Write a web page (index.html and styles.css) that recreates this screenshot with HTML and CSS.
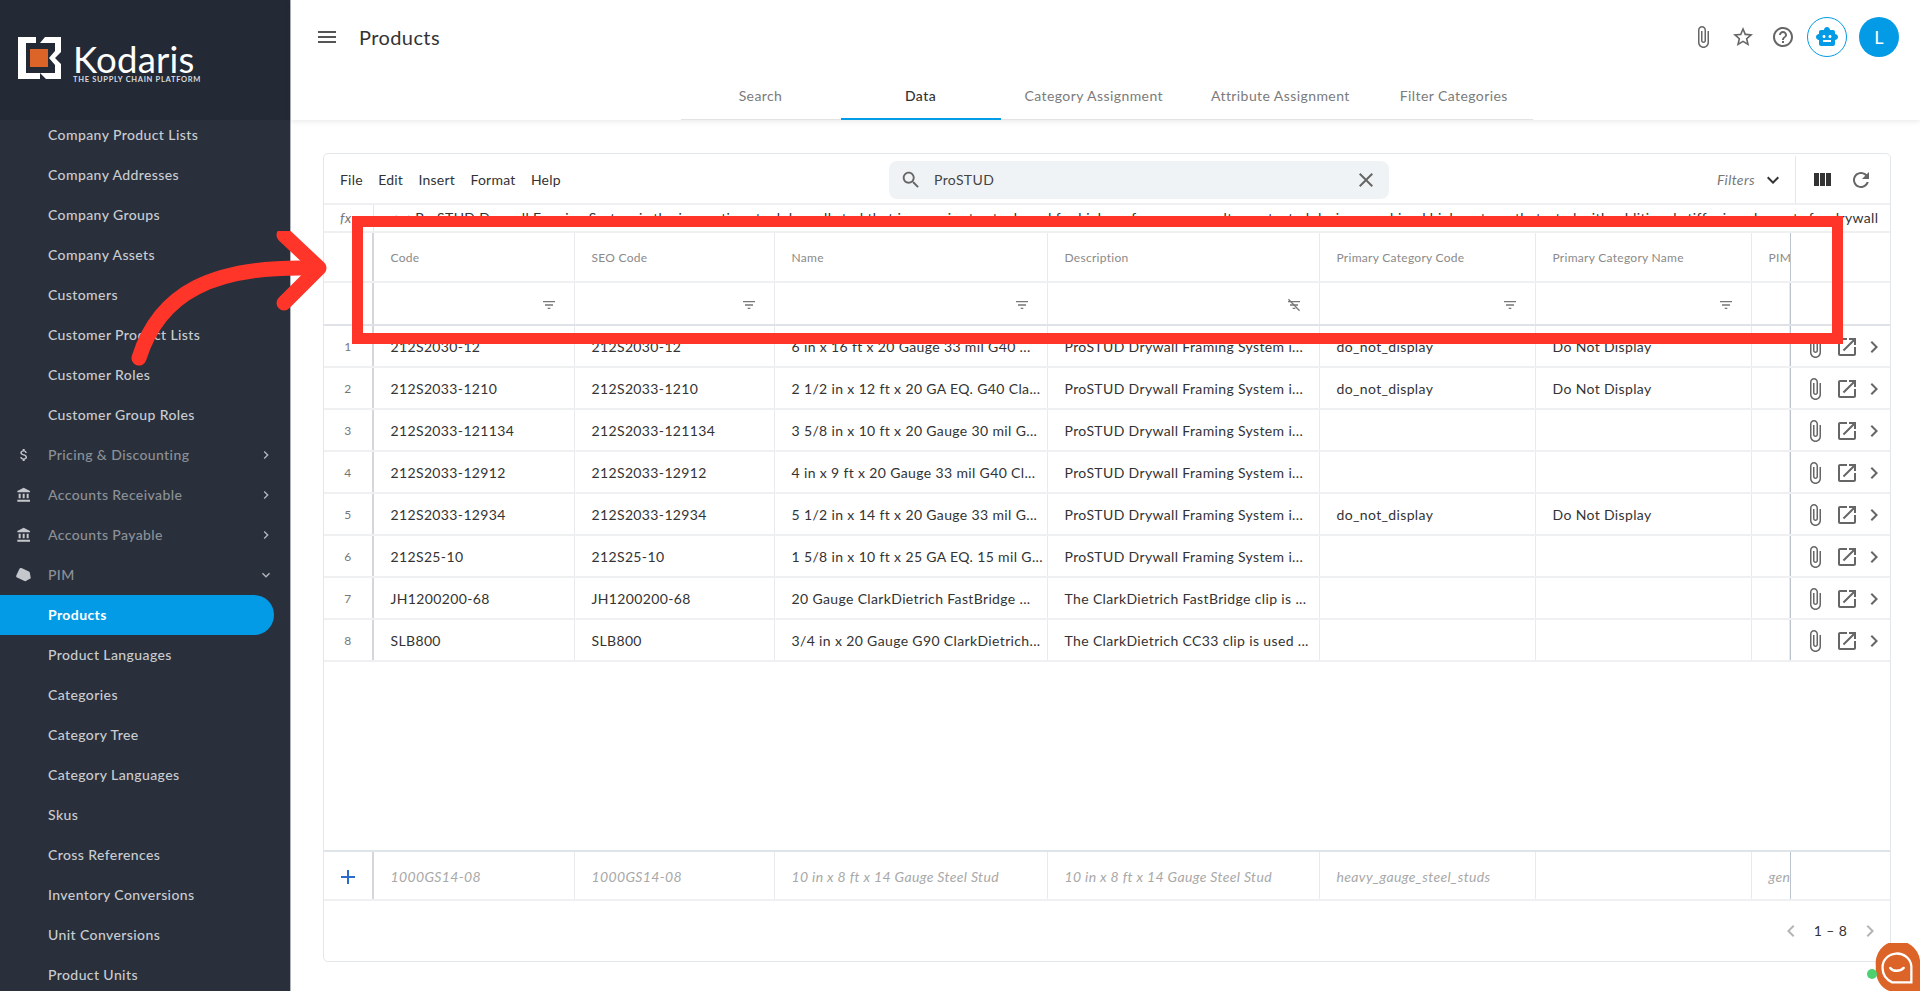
FILE: index.html
```html
<!DOCTYPE html>
<html lang="en">
<head>
<meta charset="utf-8">
<title>Products</title>
<link rel="stylesheet" href="styles.css">
</head>
<body>
<svg class="defs" aria-hidden="true">
  <symbol id="i-menu" viewBox="0 0 24 24"><path d="M3 18h18v-2H3v2zm0-5h18v-2H3v2zm0-7v2h18V6H3z"/></symbol>
  <symbol id="i-clip" viewBox="0 0 24 24"><path d="M16.5 6v11.5c0 2.21-1.79 4-4 4s-4-1.79-4-4V5c0-1.38 1.12-2.5 2.5-2.5s2.5 1.12 2.5 2.5v10.5c0 .55-.45 1-1 1s-1-.45-1-1V6H10v9.5c0 1.38 1.12 2.5 2.5 2.5s2.5-1.12 2.5-2.5V5c0-2.21-1.79-4-4-4S7 2.79 7 5v12.5c0 3.04 2.46 5.5 5.5 5.5s5.5-2.46 5.5-5.5V6h-1.5z"/></symbol>
  <symbol id="i-star" viewBox="0 0 24 24"><path d="M22 9.24l-7.19-.62L12 2 9.19 8.63 2 9.24l5.46 4.73L5.82 21 12 17.27 18.18 21l-1.63-7.03L22 9.24zM12 15.4l-3.76 2.27 1-4.28-3.32-2.88 4.38-.38L12 6.1l1.71 4.04 4.38.38-3.32 2.88 1 4.28L12 15.4z"/></symbol>
  <symbol id="i-help" viewBox="0 0 24 24"><path d="M11 18h2v-2h-2v2zm1-16C6.48 2 2 6.48 2 12s4.48 10 10 10 10-4.48 10-10S17.52 2 12 2zm0 18c-4.41 0-8-3.59-8-8s3.59-8 8-8 8 3.59 8 8-3.59 8-8 8zm0-14c-2.21 0-4 1.79-4 4h2c0-1.1.9-2 2-2s2 .9 2 2c0 2-3 1.75-3 5h2c0-2.25 3-2.5 3-5 0-2.21-1.79-4-4-4z"/></symbol>
  <symbol id="i-bot" viewBox="0 0 24 24"><path d="M20 9V7c0-1.1-.9-2-2-2h-3c0-1.66-1.34-3-3-3S9 3.34 9 5H6c-1.1 0-2 .9-2 2v2c-1.66 0-3 1.34-3 3s1.34 3 3 3v4c0 1.1.9 2 2 2h12c1.1 0 2-.9 2-2v-4c1.66 0 3-1.34 3-3s-1.34-3-3-3zM7.5 11.5C7.5 10.67 8.17 10 9 10s1.5.67 1.5 1.5S9.83 13 9 13s-1.5-.67-1.5-1.5zM16 17H8v-2h8v2zm-1-4c-.83 0-1.5-.67-1.5-1.5S14.17 10 15 10s1.5.67 1.5 1.5S15.83 13 15 13z"/></symbol>
  <symbol id="i-search" viewBox="0 0 24 24"><path d="M15.5 14h-.79l-.28-.27C15.41 12.59 16 11.11 16 9.5 16 5.91 13.09 3 9.5 3S3 5.91 3 9.5 5.91 16 9.5 16c1.61 0 3.09-.59 4.23-1.57l.27.28v.79l5 4.99L20.49 19l-4.99-5zm-6 0C7.01 14 5 11.99 5 9.5S7.01 5 9.5 5 14 7.01 14 9.5 11.99 14 9.5 14z"/></symbol>
  <symbol id="i-close" viewBox="0 0 24 24"><path d="M19 6.41L17.59 5 12 10.59 6.41 5 5 6.41 10.59 12 5 17.59 6.41 19 12 13.41 17.59 19 19 17.59 13.41 12z"/></symbol>
  <symbol id="i-down" viewBox="0 0 24 24"><path d="M16.59 8.59L12 13.17 7.41 8.59 6 10l6 6 6-6z"/></symbol>
  <symbol id="i-right" viewBox="0 0 24 24"><path d="M10 6L8.59 7.41 13.17 12l-4.58 4.59L10 18l6-6z"/></symbol>
  <symbol id="i-left" viewBox="0 0 24 24"><path d="M15.41 7.41L14 6l-6 6 6 6 1.41-1.41L10.83 12z"/></symbol>
  <symbol id="i-cols" viewBox="0 0 24 24"><path d="M10 18h5V5h-5v13zm-6 0h5V5H4v13zM16 5v13h5V5h-5z"/></symbol>
  <symbol id="i-refresh" viewBox="0 0 24 24"><path d="M17.65 6.35C16.2 4.9 14.21 4 12 4c-4.42 0-7.99 3.58-7.99 8s3.57 8 7.99 8c3.73 0 6.84-2.55 7.73-6h-2.08c-.82 2.33-3.04 4-5.65 4-3.31 0-6-2.69-6-6s2.69-6 6-6c1.66 0 3.14.69 4.22 1.78L13 11h7V4l-2.35 2.35z"/></symbol>
  <symbol id="i-filter" viewBox="0 0 24 24"><path d="M10 18h4v-2h-4v2zM3 6v2h18V6H3zm3 7h12v-2H6v2z"/></symbol>
  <symbol id="i-filter-off" viewBox="0 0 24 24"><path d="M10 18h4v-2h-4v2zM3 6v2h18V6H3zm3 7h12v-2H6v2z"/><path d="M4.4 2.6L3 4l16.6 17.4 1.4-1.4z"/></symbol>
  <symbol id="i-open" viewBox="0 0 24 24"><path d="M19 19H5V5h7V3H5c-1.11 0-2 .9-2 2v14c0 1.1.89 2 2 2h14c1.1 0 2-.9 2-2v-7h-2v7zM14 3v2h3.59l-9.83 9.83 1.41 1.41L19 6.41V10h2V3h-7z"/></symbol>
  <symbol id="i-bank" viewBox="0 0 24 24"><path d="M4 10v7h3v-7H4zm6 0v7h3v-7h-3zM2 22h19v-3H2v3zm14-12v7h3v-7h-3zm-4.5-9L2 6v2h19V6l-9.5-5z"/></symbol>
  <symbol id="i-money" viewBox="0 0 24 24"><path d="M11.8 10.9c-2.27-.59-3-1.2-3-2.15 0-1.09 1.01-1.85 2.7-1.85 1.78 0 2.44.85 2.5 2.1h2.21c-.07-1.72-1.12-3.3-3.21-3.81V3h-3v2.16c-1.94.42-3.5 1.68-3.5 3.61 0 2.31 1.91 3.46 4.7 4.13 2.5.6 3 1.48 3 2.41 0 .69-.49 1.79-2.7 1.79-2.06 0-2.87-.92-2.98-2.1h-2.2c.12 2.19 1.76 3.42 3.68 3.83V21h3v-2.15c1.95-.37 3.5-1.5 3.5-3.55 0-2.84-2.43-3.81-4.7-4.4z"/></symbol>
  <symbol id="i-tag" viewBox="0 0 24 24"><path transform="rotate(25 12 12)" d="M17.63 5.84C17.27 5.33 16.67 5 16 5L5 5.01C3.9 5.01 3 5.9 3 7v10c0 1.1.9 1.99 2 1.99L16 19c.67 0 1.27-.33 1.63-.84L22 12l-4.37-6.16z"/></symbol>
  <symbol id="i-plus" viewBox="0 0 24 24"><path d="M19 13h-6v6h-2v-6H5v-2h6V5h2v6h6v2z"/></symbol>
</svg>

<aside class="sidebar">
  <div class="brand">
    <svg class="brand-mark" viewBox="0 0 44 42">
      <path class="mark-w" d="M0 0H18V6H8V36H22V42H0Z"/>
      <path class="mark-w" d="M27 0H43V15L37 21 43 27V42H28L22 36H37V28L31 21 37 14V6H22Z"/>
      <rect class="mark-o" x="12" y="12" width="18" height="18"/>
    </svg>
    <div class="brand-text">
      <div class="brand-name">Kodaris</div>
      <div class="brand-sub">THE SUPPLY CHAIN PLATFORM</div>
    </div>
  </div>
  <nav class="nav">
    <a class="nav-item"><span class="nav-ico"></span>Company Product Lists</a>
    <a class="nav-item"><span class="nav-ico"></span>Company Addresses</a>
    <a class="nav-item"><span class="nav-ico"></span>Company Groups</a>
    <a class="nav-item"><span class="nav-ico"></span>Company Assets</a>
    <a class="nav-item"><span class="nav-ico"></span>Customers</a>
    <a class="nav-item"><span class="nav-ico"></span>Customer Product Lists</a>
    <a class="nav-item"><span class="nav-ico"></span>Customer Roles</a>
    <a class="nav-item"><span class="nav-ico"></span>Customer Group Roles</a>
    <a class="nav-item nav-group"><span class="nav-ico"><svg class="ico-16"><use href="#i-money"/></svg></span>Pricing &amp; Discounting<svg class="nav-chev"><use href="#i-right"/></svg></a>
    <a class="nav-item nav-group"><span class="nav-ico"><svg class="ico-16"><use href="#i-bank"/></svg></span>Accounts Receivable<svg class="nav-chev"><use href="#i-right"/></svg></a>
    <a class="nav-item nav-group"><span class="nav-ico"><svg class="ico-16"><use href="#i-bank"/></svg></span>Accounts Payable<svg class="nav-chev"><use href="#i-right"/></svg></a>
    <a class="nav-item nav-group"><span class="nav-ico"><svg class="ico-18"><use href="#i-tag"/></svg></span>PIM<svg class="nav-chev"><use href="#i-down"/></svg></a>
    <a class="nav-item nav-active"><span class="nav-ico"></span>Products</a>
    <a class="nav-item"><span class="nav-ico"></span>Product Languages</a>
    <a class="nav-item"><span class="nav-ico"></span>Categories</a>
    <a class="nav-item"><span class="nav-ico"></span>Category Tree</a>
    <a class="nav-item"><span class="nav-ico"></span>Category Languages</a>
    <a class="nav-item"><span class="nav-ico"></span>Skus</a>
    <a class="nav-item"><span class="nav-ico"></span>Cross References</a>
    <a class="nav-item"><span class="nav-ico"></span>Inventory Conversions</a>
    <a class="nav-item"><span class="nav-ico"></span>Unit Conversions</a>
    <a class="nav-item"><span class="nav-ico"></span>Product Units</a>
  </nav>
</aside>

<main class="main">
  <header class="header">
    <div class="topbar">
      <svg class="ico-24 hamburger"><use href="#i-menu"/></svg>
      <h1 class="title">Products</h1>
      <div class="top-actions">
        <span class="top-btn"><svg class="ico-24"><use href="#i-clip"/></svg></span>
        <span class="top-btn"><svg class="ico-24"><use href="#i-star"/></svg></span>
        <span class="top-btn"><svg class="ico-24"><use href="#i-help"/></svg></span>
        <span class="bot-btn"><svg class="ico-24"><use href="#i-bot"/></svg></span>
        <span class="avatar">L</span>
      </div>
    </div>
    <div class="tabs">
      <a class="tab">Search</a>
      <a class="tab tab-active">Data</a>
      <a class="tab">Category Assignment</a>
      <a class="tab">Attribute Assignment</a>
      <a class="tab">Filter Categories</a>
    </div>
  </header>

  <section class="content">
    <div class="card">
      <div class="toolbar">
        <div class="menus"><span>File</span><span>Edit</span><span>Insert</span><span>Format</span><span>Help</span></div>
        <div class="search">
          <svg class="ico-22"><use href="#i-search"/></svg>
          <span class="search-text">ProSTUD</span>
          <svg class="ico-24 search-x"><use href="#i-close"/></svg>
        </div>
        <div class="filters"><em>Filters</em><svg class="ico-24 dark"><use href="#i-down"/></svg></div>
        <div class="tools">
          <svg class="ico-24 dark"><use href="#i-cols"/></svg>
          <svg class="ico-24"><use href="#i-refresh"/></svg>
        </div>
      </div>

      <div class="formula">
        <div class="fx">fx</div>
        <div class="fx-text">&lt;p&gt;ProSTUD Drywall Framing System is the innovative steel drywall stud that is superior to steel used for high performance results, protected design, combined higher strength, tested with additional stiffening elements for drywall</div>
      </div>

      <div class="row row-head">
        <div class="num"></div><div class="cell">Code</div><div class="cell">SEO Code</div><div class="cell">Name</div><div class="cell">Description</div><div class="cell">Primary Category Code</div><div class="cell">Primary Category Name</div><div class="cell cell-clip">PIM Type</div><div class="acts"></div>
      </div>
      <div class="row row-filter">
        <div class="num"></div>
        <div class="cell"><svg class="ico-16 fi"><use href="#i-filter"/></svg></div>
        <div class="cell"><svg class="ico-16 fi"><use href="#i-filter"/></svg></div>
        <div class="cell"><svg class="ico-16 fi"><use href="#i-filter"/></svg></div>
        <div class="cell"><svg class="ico-16 fi"><use href="#i-filter-off"/></svg></div>
        <div class="cell"><svg class="ico-16 fi"><use href="#i-filter"/></svg></div>
        <div class="cell"><svg class="ico-16 fi"><use href="#i-filter"/></svg></div>
        <div class="cell"></div><div class="acts"></div>
      </div>

      <div class="row row-data">
        <div class="num">1</div><div class="cell">212S2030-12</div><div class="cell">212S2030-12</div><div class="cell">6 in x 16 ft x 20 Gauge 33 mil G40 ...</div><div class="cell">ProSTUD Drywall Framing System i...</div><div class="cell">do_not_display</div><div class="cell">Do Not Display</div><div class="cell"></div>
        <div class="acts"><svg class="ico-24"><use href="#i-clip"/></svg><svg class="ico-24"><use href="#i-open"/></svg><svg class="ico-24 act-next"><use href="#i-right"/></svg></div>
      </div>
      <div class="row row-data">
        <div class="num">2</div><div class="cell">212S2033-1210</div><div class="cell">212S2033-1210</div><div class="cell">2 1/2 in x 12 ft x 20 GA EQ. G40 Cla...</div><div class="cell">ProSTUD Drywall Framing System i...</div><div class="cell">do_not_display</div><div class="cell">Do Not Display</div><div class="cell"></div>
        <div class="acts"><svg class="ico-24"><use href="#i-clip"/></svg><svg class="ico-24"><use href="#i-open"/></svg><svg class="ico-24 act-next"><use href="#i-right"/></svg></div>
      </div>
      <div class="row row-data">
        <div class="num">3</div><div class="cell">212S2033-121134</div><div class="cell">212S2033-121134</div><div class="cell">3 5/8 in x 10 ft x 20 Gauge 30 mil G...</div><div class="cell">ProSTUD Drywall Framing System i...</div><div class="cell"></div><div class="cell"></div><div class="cell"></div>
        <div class="acts"><svg class="ico-24"><use href="#i-clip"/></svg><svg class="ico-24"><use href="#i-open"/></svg><svg class="ico-24 act-next"><use href="#i-right"/></svg></div>
      </div>
      <div class="row row-data">
        <div class="num">4</div><div class="cell">212S2033-12912</div><div class="cell">212S2033-12912</div><div class="cell">4 in x 9 ft x 20 Gauge 33 mil G40 Cl...</div><div class="cell">ProSTUD Drywall Framing System i...</div><div class="cell"></div><div class="cell"></div><div class="cell"></div>
        <div class="acts"><svg class="ico-24"><use href="#i-clip"/></svg><svg class="ico-24"><use href="#i-open"/></svg><svg class="ico-24 act-next"><use href="#i-right"/></svg></div>
      </div>
      <div class="row row-data">
        <div class="num">5</div><div class="cell">212S2033-12934</div><div class="cell">212S2033-12934</div><div class="cell">5 1/2 in x 14 ft x 20 Gauge 33 mil G...</div><div class="cell">ProSTUD Drywall Framing System i...</div><div class="cell">do_not_display</div><div class="cell">Do Not Display</div><div class="cell"></div>
        <div class="acts"><svg class="ico-24"><use href="#i-clip"/></svg><svg class="ico-24"><use href="#i-open"/></svg><svg class="ico-24 act-next"><use href="#i-right"/></svg></div>
      </div>
      <div class="row row-data">
        <div class="num">6</div><div class="cell">212S25-10</div><div class="cell">212S25-10</div><div class="cell">1 5/8 in x 10 ft x 25 GA EQ. 15 mil G...</div><div class="cell">ProSTUD Drywall Framing System i...</div><div class="cell"></div><div class="cell"></div><div class="cell"></div>
        <div class="acts"><svg class="ico-24"><use href="#i-clip"/></svg><svg class="ico-24"><use href="#i-open"/></svg><svg class="ico-24 act-next"><use href="#i-right"/></svg></div>
      </div>
      <div class="row row-data">
        <div class="num">7</div><div class="cell">JH1200200-68</div><div class="cell">JH1200200-68</div><div class="cell">20 Gauge ClarkDietrich FastBridge ...</div><div class="cell">The ClarkDietrich FastBridge clip is ...</div><div class="cell"></div><div class="cell"></div><div class="cell"></div>
        <div class="acts"><svg class="ico-24"><use href="#i-clip"/></svg><svg class="ico-24"><use href="#i-open"/></svg><svg class="ico-24 act-next"><use href="#i-right"/></svg></div>
      </div>
      <div class="row row-data">
        <div class="num">8</div><div class="cell">SLB800</div><div class="cell">SLB800</div><div class="cell">3/4 in x 20 Gauge G90 ClarkDietrich...</div><div class="cell">The ClarkDietrich CC33 clip is used ...</div><div class="cell"></div><div class="cell"></div><div class="cell"></div>
        <div class="acts"><svg class="ico-24"><use href="#i-clip"/></svg><svg class="ico-24"><use href="#i-open"/></svg><svg class="ico-24 act-next"><use href="#i-right"/></svg></div>
      </div>

      <div class="spacer"></div>

      <div class="row row-new">
        <div class="num"><svg class="ico-24 plus"><use href="#i-plus"/></svg></div><div class="cell">1000GS14-08</div><div class="cell">1000GS14-08</div><div class="cell">10 in x 8 ft x 14 Gauge Steel Stud</div><div class="cell">10 in x 8 ft x 14 Gauge Steel Stud</div><div class="cell">heavy_gauge_steel_studs</div><div class="cell"></div><div class="cell cell-clip">general</div><div class="acts"></div>
      </div>
      <div class="pager">
        <svg class="ico-24 pager-off"><use href="#i-left"/></svg>
        <span class="pager-text">1 – 8</span>
        <svg class="ico-24 pager-off"><use href="#i-right"/></svg>
      </div>
    </div>
  </section>
</main>

<div class="mark-box"></div>
<svg class="mark-arrow" viewBox="0 0 340 140">
  <path d="M139 127C160 60 215 36 305 37"/>
  <path d="M284 4L319 37L284 72"/>
</svg>

<svg class="chat" viewBox="0 0 50 50">
  <path class="chat-bg" d="M4 24a23 23 0 0 1 46-6V50H18C8 46 3 36 4 24z"/>
  <path class="chat-ring" d="M11 26a15 14 0 0 1 30-2v17H21C15 38 11 33 11 26z"/>
  <path class="chat-smile" d="M19 26c3 4 10 4 14 0"/>
</svg>
<span class="chat-dot"></span>
</body>
</html>
```

FILE: styles.css
```css
* { box-sizing: border-box; }
html, body { height: 100%; }
body {
  margin: 0;
  display: flex;
  height: 991px;
  overflow: hidden;
  position: relative;
  background: #fff;
  color: #333;
  font: 14px/20px Lato, "Noto Sans", sans-serif;
  letter-spacing: .36px;
}
.defs { display: none; }
svg { fill: currentColor; flex: none; display: block; }
.ico-16 { width: 16px; height: 16px; }
.ico-18 { width: 18px; height: 18px; }
.ico-22 { width: 22px; height: 22px; }
.ico-24 { width: 24px; height: 24px; }
.dark { color: #333; }

/* sidebar */
.sidebar {
  width: 291px;
  flex: none;
  background: #2a303b;
  border-right: 1px solid #aeb4ba;
  color: #c9ccd1;
  overflow: hidden;
}
.brand {
  height: 120px;
  background: #232a35;
  display: flex;
  align-items: flex-start;
  padding: 37px 0 0 18px;
}
.brand-mark { width: 44px; height: 42px; }
.mark-w { fill: #fff; }
.mark-o { fill: #dc6428; }
.brand-text { margin-left: 11px; color: #fff; }
.brand-name { font-size: 36.6px; line-height: 30px; margin-top: 7px; letter-spacing: .2px; }
.brand-sub { font-size: 7.5px; line-height: 9px; font-weight: 700; letter-spacing: .7px; margin-top: 1px; white-space: nowrap; color: #d9dbde; }
.nav { display: flex; flex-direction: column; margin-top: -5px; letter-spacing: .4px; }
.nav-item {
  height: 40px;
  flex: none;
  display: flex;
  align-items: center;
  margin-right: 16px;
  border-radius: 0 20px 20px 0;
  font-weight: 500;
  white-space: nowrap;
}
.nav-ico { width: 48px; flex: none; display: flex; justify-content: center; }
.nav-group { color: #8c9198; }
.nav-group .nav-ico { color: #c4c7cb; }
.nav-chev { width: 16px; height: 16px; margin-left: auto; color: #b4b7bc; }
.nav-active { background: #039be5; color: #fff; font-weight: 700; }

/* header */
.main { flex: 1; min-width: 0; display: flex; flex-direction: column; }
.header { height: 120px; flex: none; background: #fff; box-shadow: 0 1px 6px rgba(0,0,0,.1); position: relative; }
.topbar { height: 74px; display: flex; align-items: center; padding: 0 21px 0 24px; }
.hamburger { color: #555; }
.title { margin: -1px 0 0 20px; font-size: 20px; font-weight: 400; letter-spacing: .4px; }
.top-actions { margin-left: auto; display: flex; align-items: center; color: #666; }
.top-btn { width: 40px; display: flex; justify-content: center; }
.bot-btn {
  width: 40px; height: 40px; margin-left: 4px;
  border: 1px solid #039be5; border-radius: 50%;
  display: flex; align-items: center; justify-content: center;
  color: #039be5;
}
.avatar {
  width: 40px; height: 40px; margin-left: 12px;
  border-radius: 50%; background: #039be5; color: #fff;
  display: flex; align-items: center; justify-content: center;
  font-size: 18px;
}
.tabs { display: flex; width: 852px; margin: 0 auto; position: relative; left: 1px; height: 46px; border-bottom: 1px solid #e3e3e3; }
.tab {
  flex: 0 0 auto; min-width: 160px; padding: 0 24px 3px; margin-bottom: -1px;
  display: flex; align-items: center; justify-content: center;
  color: #7b7b7b; white-space: nowrap; letter-spacing: .42px;
}
.tab-active { color: #333; font-weight: 500; border-bottom: 2px solid #039be5; padding-bottom: 1px; }

/* card */
.content { flex: 1; min-height: 0; padding: 33px 29px 29px 32px; }
.card {
  height: 809px;
  border: 1px solid #e4e7ea;
  border-radius: 5px;
  display: flex;
  flex-direction: column;
}
.toolbar { height: 51px; flex: none; display: flex; align-items: center; padding-top: 2px; border-bottom: 2px solid #eef0f2; }
.menus { width: 565px; flex: none; display: flex; gap: 15.5px; padding-left: 16px; letter-spacing: .2px; }
.search {
  width: 500px; height: 38px; flex: none;
  background: #f0f3f5; border-radius: 8px;
  display: flex; align-items: center;
  padding: 0 11px; color: #666;
}
.search-text { margin-left: 12px; color: #444; }
.search-x { margin-left: auto; }
.filters { flex: 1; display: flex; align-items: center; justify-content: flex-end; padding-right: 10px; height: 100%; border-right: 1px solid #e4e7ea; color: #777; }
.filters em { margin-right: 6px; }
.tools { width: 94px; flex: none; display: flex; align-items: center; padding-left: 14px; gap: 15px; color: #666; }

.formula { height: 28px; flex: none; display: flex; align-items: center; border-bottom: 2px solid #eef0f2; overflow: hidden; }
.fx { width: 50px; flex: none; height: 100%; padding-left: 16px; border-right: 1px solid #e4e7ea; color: #777; font-style: italic; line-height: 26px; }
.fx-text { margin-left: 16px; margin-right: 10px; white-space: nowrap; overflow: hidden; flex: 1; min-width: 0; }

/* table */
.row {
  display: grid;
  grid-template-columns: 50px 201px 200px 273px 272px 216px 216px 38px 100px;
  flex: none;
  border-bottom: 2px solid #eef0f2;
}
.num { display: flex; align-items: center; justify-content: center; padding-top: 2px; border-right: 2px solid #d3d6da; font-size: 12px; color: #777; }
.cell {
  display: flex; align-items: center;
  padding: 2px 0 0 16.5px;
  border-right: 1px solid #e8eaed;
  white-space: nowrap; overflow: hidden;
  min-width: 0;
}
.cell-clip { border-right: 0; }
.acts { display: flex; align-items: center; border-left: 1px solid #bcc5ce; padding: 2px 0 0 12px; gap: 8px; color: #666; }
.act-next { margin-left: -5px; }
.row-head { height: 50px; font-size: 12px; color: #8a8a8a; letter-spacing: .28px; }
.row-filter { height: 43px; border-bottom-color: #dfe3e7; }
.row-filter .cell { justify-content: flex-end; padding-right: 17px; color: #777; }
.row-data { height: 42px; }
.spacer { flex: 1; }
.row-new { height: 51px; border-top: 2px solid #dfe4e9; font-style: italic; color: #a8a8a8; }
.plus { color: #2b6ccb; }
.pager { height: 60px; flex: none; display: flex; align-items: center; justify-content: flex-end; padding-right: 8px; }
.pager-off { color: #b5b5b5; }
.pager-text { width: 55px; text-align: center; }

/* overlays */
.mark-box {
  position: absolute; left: 352px; top: 216px;
  width: 1491px; height: 128px;
  border: 11px solid #ff3529;
}
.mark-arrow { position: absolute; left: 0; top: 231px; width: 340px; height: 140px; fill: none; stroke: #ff3529; stroke-width: 15px; stroke-linecap: round; stroke-linejoin: round; }
.chat { position: absolute; right: 0; top: 943px; width: 48px; height: 48px; }
.chat-bg { fill: #dc6428; }
.chat-ring { fill: none; stroke: #fff; stroke-width: 2.4px; }
.chat-smile { fill: none; stroke: #fff; stroke-width: 2.6px; stroke-linecap: round; }
.chat-dot { position: absolute; left: 1867px; top: 969px; width: 10px; height: 10px; border-radius: 50%; background: #4cd070; }
```
